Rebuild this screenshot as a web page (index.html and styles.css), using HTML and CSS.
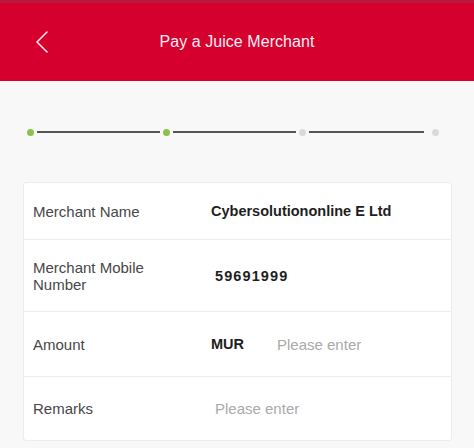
FILE: index.html
```html
<!DOCTYPE html>
<html>
<head>
<meta charset="utf-8">
<link rel="stylesheet" href="styles.css">
</head>
<body>
<div class="app">
  <header class="topbar">
    <div class="strip"></div>
    <div class="bar">
      <span class="back">
        <svg width="14" height="22" viewBox="0 0 14 22"><path d="M12 1 L2 11 L12 21" fill="none" stroke="#fbe3e8" stroke-width="1.6" stroke-linecap="round" stroke-linejoin="round"/></svg>
      </span>
      <h1 class="title">Pay a Juice Merchant</h1>
    </div>
  </header>
  <main class="content">
    <div class="steps">
      <span class="dot done"></span>
      <span class="line l1"></span>
      <span class="dot done"></span>
      <span class="line l2"></span>
      <span class="dot"></span>
      <span class="line l3"></span>
      <span class="dot last"></span>
    </div>
    <div class="card">
      <div class="row r1">
        <div class="label">Merchant Name</div>
        <div class="value strong">Cybersolutiononline E Ltd</div>
      </div>
      <div class="row r2">
        <div class="label">Merchant Mobile<br>Number</div>
        <div class="value strong num">59691999</div>
      </div>
      <div class="row r3">
        <div class="label">Amount</div>
        <div class="value amount"><span class="strong cur">MUR</span><span class="ph">Please enter</span></div>
      </div>
      <div class="row r4">
        <div class="label">Remarks</div>
        <div class="value"><span class="ph">Please enter</span></div>
      </div>
    </div>
  </main>
</div>
</body>
</html>
```
FILE: styles.css
```css
html, body {
  margin: 0;
  padding: 0;
}
body {
  width: 474px;
  height: 448px;
  overflow: hidden;
  background: #f8f8f8;
  font-family: "Liberation Sans", Arial, sans-serif;
}
.topbar {
  display: flex;
  flex-direction: column;
}
.strip {
  height: 3px;
  background: #b8193c;
}
.bar {
  height: 78px;
  background: #d6002f;
  display: flex;
  align-items: center;
  justify-content: center;
  position: relative;
}
.back {
  position: absolute;
  left: 35px;
  top: 28px;
  display: flex;
}
.title {
  margin: 0;
  font-size: 16px;
  font-weight: normal;
  color: #fbeef1;
  letter-spacing: 0.05px;
}
.content {
  background: #f8f8f8;
  padding-top: 47px;
}
.steps {
  display: flex;
  align-items: center;
  padding-left: 27px;
  height: 8px;
}
.dot {
  width: 7px;
  height: 7px;
  border-radius: 50%;
  background: #dadada;
  flex: none;
}
.dot.done {
  background: #8bc34a;
}
.line {
  height: 2px;
  background: #555;
  margin: 0 3px;
  flex: none;
}
.l1, .l2 { width: 123px; }
.l3 { width: 115px; margin-right: 8px; }
.card {
  margin: 46px 0 0 23px;
  width: 427px;
  background: #fff;
  border: 1px solid #ececec;
  border-radius: 3px;
}
.row {
  display: flex;
  align-items: center;
  border-bottom: 1px solid #eeeeee;
  box-sizing: border-box;
}
.row:last-child { border-bottom: none; }
.r1 { height: 57px; }
.r2 { height: 72px; }
.r3 { height: 65px; }
.r4 { height: 63px; }
.label {
  width: 187px;
  padding-left: 9px;
  box-sizing: border-box;
  font-size: 15px;
  line-height: 17px;
  color: #474747;
  flex: none;
}
.value {
  font-size: 15px;
  color: #1e1e1e;
}
.strong {
  font-weight: bold;
  font-size: 14.5px;
  color: #1e1e1e;
}
.num {
  padding-left: 4px;
  letter-spacing: 1.1px;
}
.amount {
  display: flex;
  align-items: center;
}
.cur {
  width: 66px;
}
.ph {
  color: #a9a9a9;
  font-size: 15px;
}
.r4 .value {
  padding-left: 4px;
}
```
